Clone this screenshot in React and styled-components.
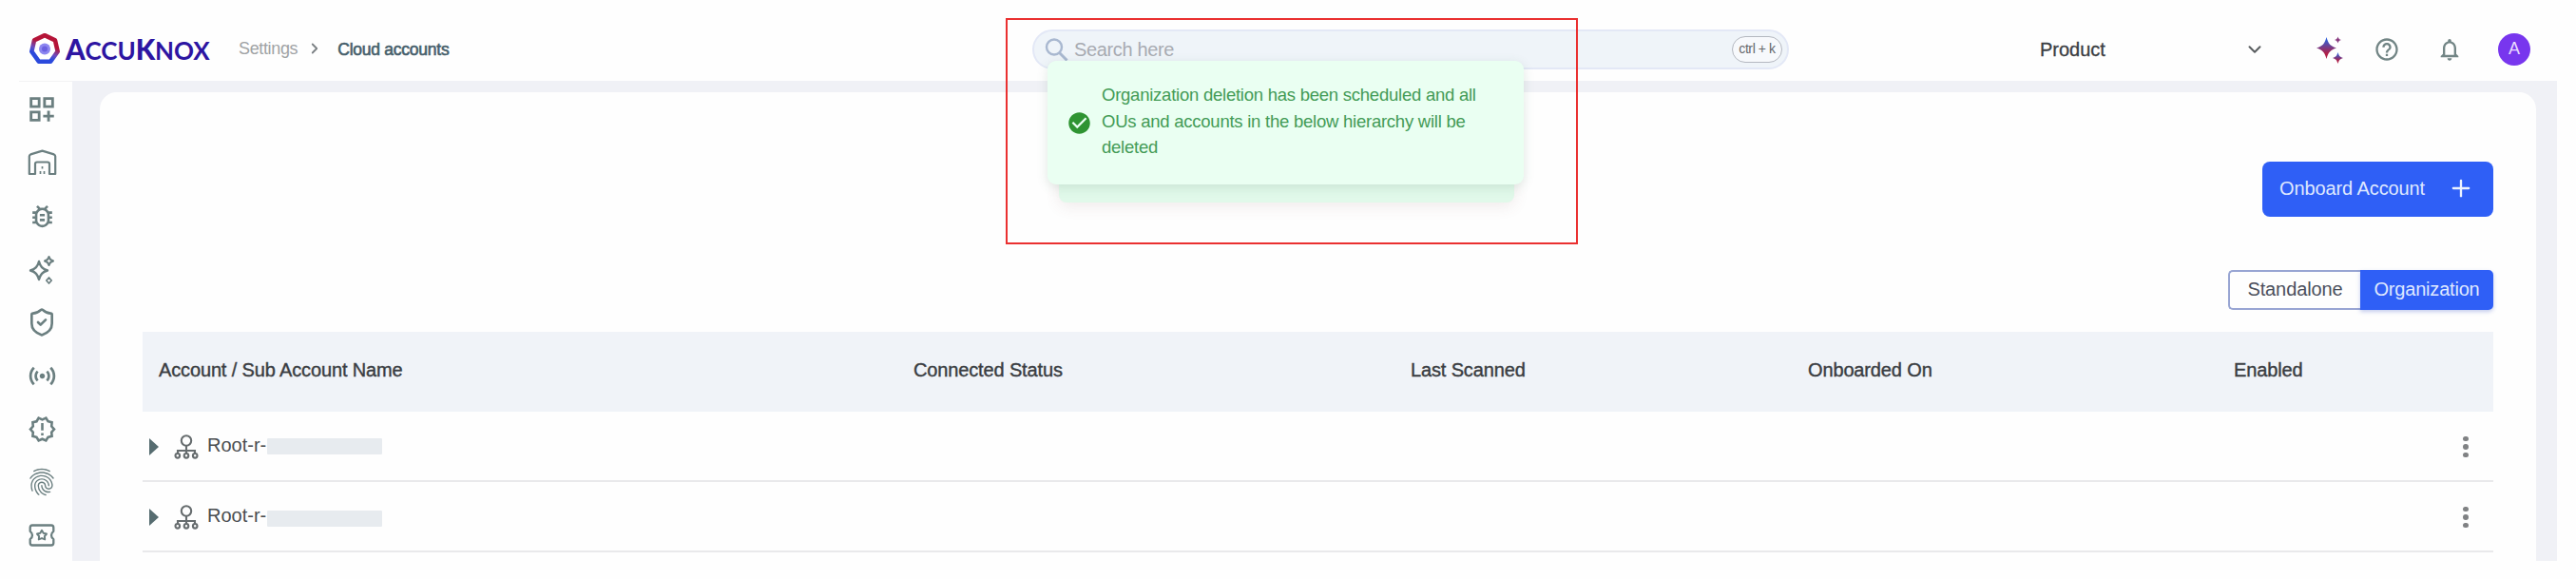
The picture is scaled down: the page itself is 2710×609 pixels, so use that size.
import React from 'react';
import styled, { createGlobalStyle } from 'styled-components';
import {
  MdOutlineDashboardCustomize, MdOutlineBugReport, MdSensors, MdOutlineNewReleases,
  MdFingerprint, MdHelpOutline, MdNotificationsNone, MdCheckCircle,
} from 'react-icons/md';
import { ShieldCheck, ChevronDown, ChevronRight, Plus } from 'lucide-react';

const Global = createGlobalStyle`
  * { box-sizing: border-box; }
  body { margin: 0; background: #fefefe; font-family: "Liberation Sans", Arial, sans-serif; }
`;

const Page = styled.div`
  position: relative;
  width: 2710px;
  height: 609px;
  padding: 19px 20px 19px;
  overflow: hidden;
  display: flex;
  flex-direction: column;
  background: #fefefe;
`;

const Txt = styled.span`
  font-size: ${(p) => p.$size || 20}px;
  letter-spacing: ${(p) => p.$ls || 0}px;
  color: ${(p) => p.$color || '#3a3d42'};
  -webkit-text-stroke: ${(p) => p.$stroke || 0}px currentColor;
  white-space: pre;
  line-height: 1.2;
`;

const Header = styled.header`
  flex: none;
  height: 66px;
  display: flex;
  align-items: center;
  padding: 0 28px 0 10px;
`;

const Brand = styled.div`
  width: 221px;
  display: flex;
  align-items: center;
  gap: 5px;
`;

const WordmarkText = styled.span`
  font-family: Lato, sans-serif;
  font-weight: 700;
  font-size: 26px;
  line-height: 1.2;
  letter-spacing: -0.1px;
  color: #2d15a2;
  white-space: pre;
`;

const WordmarkCap = styled.b`
  font-size: 29.5px;
  font-weight: 900;
`;

const Crumbs = styled.nav`
  width: 835px;
  display: flex;
  align-items: center;
  color: #7b8084;
`;

const CrumbDivider = styled.span`
  display: flex;
  margin: 0 15px 2px 9px;
`;

const Search = styled.div`
  width: 796px;
  height: 42px;
  margin-bottom: 1px;
  border: 2px solid #e3e8f6;
  border-radius: 21px;
  background: #eff4f9;
  display: flex;
  align-items: center;
  padding: 0 5px 0 11px;
  gap: 6px;
`;

const Shortcut = styled.span`
  margin-left: auto;
  width: 53px;
  height: 28px;
  border: 1.5px solid #b4b8c0;
  border-radius: 14px;
  background: #f7f9fc;
  display: flex;
  align-items: center;
  justify-content: center;
`;

const ProductPicker = styled.div`
  margin-left: 264px;
  width: 237px;
  display: flex;
  align-items: center;
  justify-content: space-between;
  color: #5a5e60;
`;

const Actions = styled.div`
  margin-left: auto;
  display: flex;
  align-items: center;
  color: #728585;
`;

const ActionIcon = styled.span`
  display: flex;
  margin-right: ${(p) => p.$gap}px;
`;

const Avatar = styled.span`
  width: 34px;
  height: 34px;
  border-radius: 50%;
  background: #7836ee;
  display: flex;
  align-items: center;
  justify-content: center;
`;

const Body = styled.div`
  flex: 1;
  min-height: 0;
  display: flex;
`;

const Sidebar = styled.aside`
  width: 56px;
  padding: 1px 8px 0 0;
  display: flex;
  flex-direction: column;
  align-items: center;
  color: #6b7f80;
  border-top: 1px solid #f2f2f4;
`;

const SideItem = styled.a`
  flex: none;
  height: 56px;
  display: flex;
  align-items: center;
  justify-content: center;
`;

const Main = styled.main`
  flex: 1;
  background: #f0f1f6;
  padding: 12px 22px 0 29px;
`;

const Panel = styled.section`
  height: 100%;
  background: #fefefe;
  border-radius: 18px 18px 0 0;
  padding: 73px 45px 0;
  display: flex;
  flex-direction: column;
`;

const OnboardButton = styled.button`
  align-self: flex-end;
  width: 243px;
  height: 58px;
  border: 0;
  border-radius: 8px;
  background: #2f5ff6;
  color: #edf3ff;
  font-family: inherit;
  display: flex;
  align-items: center;
  justify-content: space-between;
  padding: 0 20px 3px 18px;
`;

const Toggle = styled.div`
  align-self: flex-end;
  margin: 56px 0 23px;
  width: 279px;
  height: 42px;
  display: flex;
  border-radius: 5px;
`;

const ToggleOption = styled.div`
  width: ${(p) => (p.$active ? 140 : 139)}px;
  display: flex;
  align-items: center;
  justify-content: center;
  padding-bottom: 3px;
  background: ${(p) => (p.$active ? '#2f5ff6' : '#fefefe')};
  border: 2px solid ${(p) => (p.$active ? '#2f5ff6' : '#98a5d3')};
  border-right-width: ${(p) => (p.$active ? 2 : 0)}px;
  border-radius: ${(p) => (p.$active ? '0 5px 5px 0' : '5px 0 0 5px')};
  box-shadow: ${(p) => (p.$active ? '0 2px 4px rgba(60, 90, 200, 0.3)' : 'none')};
`;

const TableHead = styled.div`
  flex: none;
  height: 84px;
  background: #f0f3f8;
  display: grid;
  grid-template-columns: 794px 523px 418px 448px 1fr;
  align-items: center;
  padding: 0 0 5px 17px;
`;

const TableRow = styled.div`
  flex: none;
  height: 74px;
  border-bottom: 2px solid #e9e9eb;
  display: flex;
  align-items: center;
  padding: 2px 26px 0 7px;
`;

const AccountName = styled.div`
  width: 184px;
  height: 32px;
  margin-left: 9px;
  display: flex;
  align-items: center;
  position: relative;
  padding-bottom: 4px;
`;

const Redaction = styled.span`
  position: absolute;
  left: 63px;
  top: ${(p) => p.$top}px;
  width: 121px;
  height: 17px;
  border-radius: 1px;
  background: #e7ebef;
`;

const OrgMark = styled.span`
  display: flex;
  margin-left: 16px;
`;

const Kebab = styled.span`
  margin-left: auto;
  display: flex;
  flex-direction: column;
  gap: 2.8px;
`;

const Dot = styled.i`
  width: 5.8px;
  height: 5.8px;
  border-radius: 50%;
  background: #808284;
`;

const ToastBack = styled.div`
  position: absolute;
  left: 1114px;
  top: 100px;
  width: 479px;
  height: 113px;
  border-radius: 8px;
  background: #e1f9ea;
  box-shadow: 0 4px 16px rgba(120, 70, 70, 0.11);
`;

const Toast = styled.div`
  position: absolute;
  left: 1102px;
  top: 64px;
  width: 501px;
  height: 130px;
  border-radius: 9px;
  background: #eafff2;
  box-shadow: 0 3px 12px rgba(60, 110, 80, 0.15);
  display: flex;
  align-items: center;
  padding: 0 22px 0 20px;
  gap: 10px;
  color: #2f9432;
`;

const ToastText = styled.p`
  margin: 0 0 3px;
  font-size: 18.5px;
  line-height: 27.6px;
  letter-spacing: -0.24px;
  white-space: pre;
  color: #439b56;
`;

const Highlight = styled.div`
  position: absolute;
  left: 1058px;
  top: 19px;
  width: 602px;
  height: 238px;
  border: 2px solid #ea3030;
`;

const Logo = () => (
  <svg width="34" height="35" viewBox="0 0 34 35">
    <defs>
      <linearGradient id="ring" x1="0.75" y1="0" x2="0.35" y2="1">
        <stop offset="0.35" stopColor="#b51438" />
        <stop offset="0.62" stopColor="#6a4cc0" />
        <stop offset="0.8" stopColor="#2b49dc" />
      </linearGradient>
    </defs>
    <path d="M17 3.2 28 8.4 30.7 20.2 23.2 30.7H10.8L3.3 20.2 6 8.4Z" fill="#fff" stroke="url(#ring)" strokeWidth="4.6" strokeLinejoin="round" />
    <circle cx="17" cy="17.5" r="6" fill="#8c86f0" />
    <circle cx="17" cy="17.5" r="3" fill="#6a60e0" />
  </svg>
);

const Wordmark = () => (
  <WordmarkText>
    <WordmarkCap>A</WordmarkCap>CCU<WordmarkCap>K</WordmarkCap>NOX
  </WordmarkText>
);

const SearchIcon = () => (
  <svg width="25" height="26" viewBox="0 0 25 26" fill="none" stroke="#a9b8d0" strokeWidth="2.4">
    <circle cx="10" cy="10.5" r="8" />
    <path d="M15.5 16.5 23.5 24.5" strokeWidth="3" />
  </svg>
);

const AiSparkle = () => (
  <svg width="28" height="29" viewBox="0 0 28 29">
    <defs>
      <linearGradient id="ai" x1="0" y1="0" x2="0" y2="1">
        <stop offset="0.1" stopColor="#2f60d8" />
        <stop offset="0.75" stopColor="#b02048" />
      </linearGradient>
    </defs>
    <path fill="url(#ai)" d="M10.500 1C12.500 8 14.500 10.500 21 12.500 14.500 14.500 12.500 17 10.500 24 8.500 17 6.500 14.500 0 12.500 6.500 10.500 8.500 8 10.500 1Z" />
    <path fill="#8a3c80" d="M22.500 0.500C23.200 2.700 23.800 3.300 26 4 23.800 4.700 23.200 5.300 22.500 7.500 21.800 5.300 21.200 4.700 19 4 21.200 3.300 21.800 2.700 22.500 0.500Z" />
    <path fill="url(#ai)" d="M22.500 17C23.600 20.600 24.400 21.800 28 23 24.400 24.200 23.600 25.400 22.500 29 21.400 25.400 20.600 24.200 17 23 20.600 21.800 21.400 20.600 22.500 17Z" />
  </svg>
);

const WarehouseIcon = () => (
  <svg width="31" height="29" viewBox="0 0 31 29" fill="none" stroke="currentColor" strokeWidth="2.200" strokeLinejoin="round">
    <path d="M1.800 26V7.500Q1.800 6 3.200 5.400L15.500 1.600 27.800 5.400Q29.200 6 29.200 7.500V26H23V15.500Q23 13.500 21 13.500H10Q8 13.500 8 15.500V26Z" />
    <path strokeWidth="1.700" d="M15.500 18V20.500M13.500 23V26M17.500 23V26" />
  </svg>
);

const SparkOutline = () => (
  <svg width="30" height="31" viewBox="0 0 30 31" fill="none" stroke="currentColor" strokeWidth="2.400" strokeLinejoin="round">
    <path d="M12 7C13.500 12.500 15.500 14.800 21 16.500 15.500 18.200 13.500 20.500 12 26 10.500 20.500 8.500 18.200 3 16.500 8.500 14.800 10.500 12.500 12 7Z" />
    <path strokeWidth="2" d="M22.500 2 24 5 27 6.500 24 8 22.500 11 21 8 18 6.500 21 5Z" />
    <path strokeWidth="1.700" d="M22.500 24 25.200 27 22.500 30 19.800 27Z" />
  </svg>
);

const TicketIcon = () => (
  <svg width="28" height="24" viewBox="0 0 28 24" fill="none" stroke="currentColor" strokeWidth="2.300" strokeLinejoin="round">
    <path d="M4 1.500H24Q26.300 1.500 26.300 4V7.800Q24 9.500 24 12 24 14.500 26.300 16.200V20Q26.300 22.500 24 22.500H4Q1.700 22.500 1.700 20V16.200Q4 14.500 4 12 4 9.500 1.700 7.800V4Q1.700 1.500 4 1.500Z" />
    <path strokeWidth="2" d="M14 6.800 15.700 9.800 19 10.500 16.900 13 17.200 16.400 14 15.100 10.800 16.400 11.100 13 9 10.500 12.300 9.800Z" />
  </svg>
);

const OrgIcon = () => (
  <svg width="26" height="26" viewBox="0 0 26 26" fill="none" stroke="#666c6e" strokeWidth="2.100">
    <circle cx="13" cy="6.500" r="5.200" />
    <path d="M13 11.700V20M4 20V17H22V20" />
    <circle cx="3.800" cy="22.300" r="2.300" />
    <circle cx="13" cy="22.300" r="2.300" />
    <circle cx="22.200" cy="22.300" r="2.300" />
  </svg>
);

const Arrow = () => (
  <svg width="10" height="18" viewBox="0 0 10 18"><path d="M0 0 10 9 0 18Z" fill="#566c70" /></svg>
);

const sideIcons = [
  <MdOutlineDashboardCustomize size={34} />,
  <WarehouseIcon />,
  <MdOutlineBugReport size={31} />,
  <SparkOutline />,
  <ShieldCheck size={32} strokeWidth={2} />,
  <MdSensors size={33} />,
  <MdOutlineNewReleases size={31} />,
  <MdFingerprint size={34} />,
  <TicketIcon />,
];

const Row = ({ name, top }) => (
  <TableRow>
    <Arrow />
    <OrgMark><OrgIcon /></OrgMark>
    <AccountName>
      <Txt $color="#4a4d50">{name}</Txt>
      <Redaction $top={top} />
    </AccountName>
    <Kebab><Dot /><Dot /><Dot /></Kebab>
  </TableRow>
);

const columns = ['Account / Sub Account Name', 'Connected Status', 'Last Scanned', 'Onboarded On', 'Enabled'];

export default function App() {
  return (
    <Page>
      <Global />
      <Header>
        <Brand><Logo /><Wordmark /></Brand>
        <Crumbs>
          <Txt $size={18} $ls={-0.35} $color="#a0a3a5">Settings</Txt>
          <CrumbDivider><ChevronRight size={18} strokeWidth={2.4} /></CrumbDivider>
          <Txt $size={17.5} $ls={-0.25} $color="#465e6b" $stroke={0.6}>Cloud accounts</Txt>
        </Crumbs>
        <Search>
          <SearchIcon />
          <Txt $ls={-0.35} $color="#a8abb2">Search here</Txt>
          <Shortcut><Txt $size={14} $ls={-0.4} $color="#65686c">ctrl + k</Txt></Shortcut>
        </Search>
        <ProductPicker>
          <Txt $stroke={0.3}>Product</Txt>
          <ChevronDown size={22} strokeWidth={2.2} />
        </ProductPicker>
        <Actions>
          <ActionIcon $gap={32}><AiSparkle /></ActionIcon>
          <ActionIcon $gap={38}><MdHelpOutline size={28} /></ActionIcon>
          <ActionIcon $gap={37}><MdNotificationsNone size={28} /></ActionIcon>
          <Avatar><Txt $size={18} $color="#eadcff">A</Txt></Avatar>
        </Actions>
      </Header>
      <Body>
        <Sidebar>
          {sideIcons.map((icon, i) => <SideItem key={i}>{icon}</SideItem>)}
        </Sidebar>
        <Main>
          <Panel>
            <OnboardButton>
              <Txt $ls={-0.1} $color="#dfe8ff">Onboard Account</Txt>
              <Plus size={28} strokeWidth={2} />
            </OnboardButton>
            <Toggle>
              <ToggleOption><Txt $ls={-0.1} $color="#4b4f5c">Standalone</Txt></ToggleOption>
              <ToggleOption $active><Txt $ls={-0.2} $color="#dfe8ff">Organization</Txt></ToggleOption>
            </Toggle>
            <TableHead>
              {columns.map((label) => <Txt key={label} $ls={-0.14} $stroke={0.4}>{label}</Txt>)}
            </TableHead>
            <Row name="Root-r-" top={7} />
            <Row name="Root-r-" top={9} />
          </Panel>
        </Main>
      </Body>
      <ToastBack />
      <Toast>
        <MdCheckCircle size={27} />
        <ToastText>{'Organization deletion has been scheduled and all\nOUs and accounts in the below hierarchy will be\ndeleted'}</ToastText>
      </Toast>
      <Highlight />
    </Page>
  );
}
